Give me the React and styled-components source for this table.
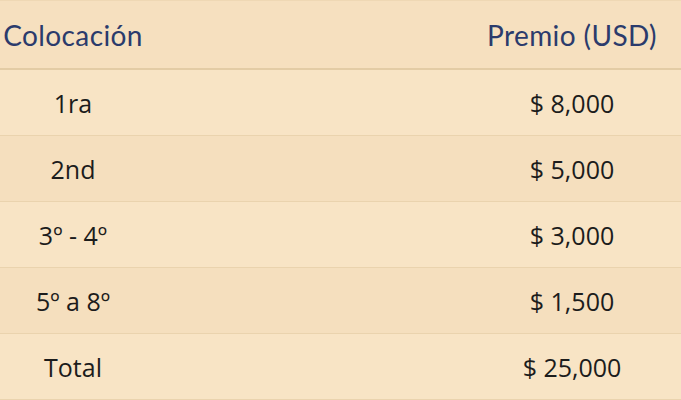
import React from 'react'
import styled, { createGlobalStyle } from 'styled-components'

const GlobalStyle = createGlobalStyle`
  html, body {
    margin: 0;
    padding: 0;
    background-color: #f8e4c4;
  }
`;

const Table = styled.div`
  width: 681px;
  height: 400px;
  overflow: hidden;
  background-color: #f8e4c4;
  border-top: 1px solid #efd8b4;
`;

const HeadRow = styled.div`
  display: flex;
  justify-content: space-between;
  align-items: center;
  height: 67px;
  background-color: #f6e0bf;
  border-bottom: 2px solid #e3cca5;
`;

const Row = styled.div`
  display: flex;
  justify-content: space-between;
  align-items: center;
  height: 65px;
  background-color: ${p => (p.$shaded ? '#f5dfbe' : '#f8e4c5')};
  border-bottom: 1px solid #ead3ae;
`;

const HeadCell = styled.div`
  width: ${p => p.$width}px;
  white-space: nowrap;
  text-align: center;
  font-family: Lato, "Noto Sans", sans-serif;
  font-size: 28px;
  color: #2b3b6c;
  letter-spacing: 0.4px;
`;

const Cell = styled.div`
  width: ${p => p.$width}px;
  text-align: center;
  font-family: "Open Sans", "Noto Sans", sans-serif;
  font-size: 25px;
  color: #1c1c1c;
`;

const prizes = [
  { place: '1ra', amount: '$ 8,000' },
  { place: '2nd', amount: '$ 5,000' },
  { place: '3º - 4º', amount: '$ 3,000' },
  { place: '5º a 8º', amount: '$ 1,500' },
  { place: 'Total', amount: '$ 25,000' },
];

export default function App() {
  return (
    <>
      <GlobalStyle />
      <Table>
        <HeadRow>
          <HeadCell $width={146}>Colocación</HeadCell>
          <HeadCell $width={218}>Premio (USD)</HeadCell>
        </HeadRow>
        {prizes.map((p, i) => (
          <Row key={p.place} $shaded={i % 2 === 1}>
            <Cell $width={146}>{p.place}</Cell>
            <Cell $width={218}>{p.amount}</Cell>
          </Row>
        ))}
      </Table>
    </>
  );
}
